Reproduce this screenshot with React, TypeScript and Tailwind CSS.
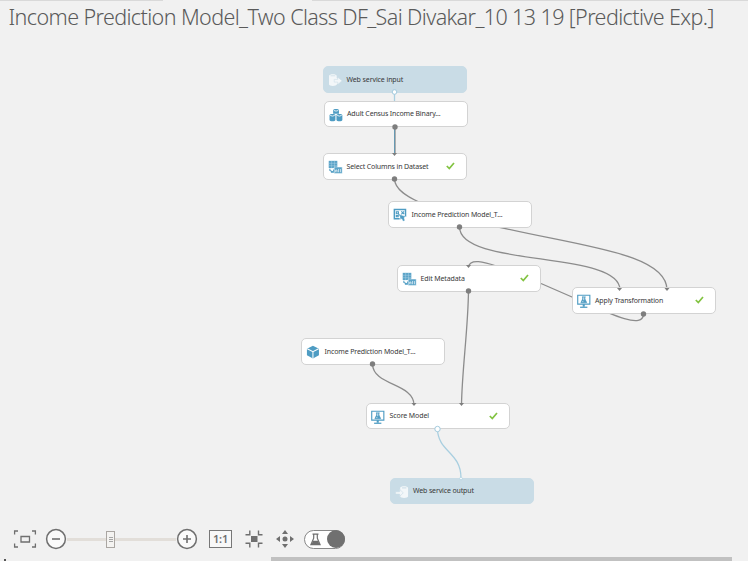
import type { ReactNode } from 'react';

type IconKind = 'input' | 'output' | 'dataset' | 'columns' | 'transform' | 'model' | 'monitor';

interface GraphNode {
  place: string;
  label: string;
  text: string;
  icon: IconKind;
  service?: boolean;
  done?: boolean;
}

const nodes: GraphNode[] = [
  { place: 'left-[323px] top-[26px]', label: 'Web service input', text: 'tracking-[-0.1px]', icon: 'input', service: true },
  { place: 'left-[323.5px] top-[60.5px]', label: 'Adult Census Income Binary...', text: 'tracking-[-0.15px]', icon: 'dataset' },
  { place: 'left-[323px] top-[113px]', label: 'Select Columns in Dataset', text: 'tracking-[-0.14px]', icon: 'columns', done: true },
  { place: 'left-[388px] top-[161px]', label: 'Income Prediction Model_T...', text: 'tracking-[-0.13px]', icon: 'transform' },
  { place: 'left-[397px] top-[225px]', label: 'Edit Metadata', text: 'tracking-[-0.12px]', icon: 'columns', done: true },
  { place: 'left-[571.5px] top-[247px]', label: 'Apply Transformation', text: 'tracking-[-0.15px]', icon: 'monitor', done: true },
  { place: 'left-[301px] top-[298px]', label: 'Income Prediction Model_T...', text: 'tracking-[-0.13px]', icon: 'model' },
  { place: 'left-[366px] top-[362.5px]', label: 'Score Model', text: 'tracking-[-0.1px]', icon: 'monitor', done: true },
  { place: 'left-[389.5px] top-[437.5px]', label: 'Web service output', text: 'tracking-[-0.14px]', icon: 'output', service: true },
];

const glyphs: Record<IconKind, ReactNode> = {
  input: (
    <g fill="#f3f7f9">
      <path d="M1 2.6C1 .6 8.400 .6 8.400 2.600V4.800L13.500 7.500 8.400 11V11.200C8.400 13 1 13 1 11.200Z" />
      <path d="M6 6.200h3.500V4L13.500 7.500 9.500 11V8.800H6Z" stroke="#c9dce6" strokeWidth=".5" />
      <path d="M2.500 2.700h4.500" stroke="#c9dce6" strokeWidth=".7" />
    </g>
  ),
  output: (
    <g fill="#f3f7f9">
      <path d="M5 2.600C5 .6 12.600 .6 12.600 2.600V11.200C12.600 13 5 13 5 11.200Z" />
      <path d="M.5 6.500h4V4.200L8 7.600 4.500 11V8.800H.5Z" stroke="#c9dce6" strokeWidth=".6" />
      <path d="M6.800 2.800h4.200" stroke="#c9dce6" strokeWidth="1" />
    </g>
  ),
  dataset: (
    <g fill="#4e9cc3">
      <path d="M4 2.200C4 .4 9.600 .4 9.600 2.200V5.500H4Z" />
      <path d="M.5 7C.5 5.300 6.200 5.300 6.200 7V11.700C6.200 13.300 .5 13.300 .5 11.700ZM7.200 7C7.200 5.300 12.900 5.300 12.900 7V11.700C12.900 13.300 7.200 13.300 7.200 11.700Z" />
      <path d="M4.700 2.400Q6.800 3.600 8.900 2.400M1.200 7.200Q3.300 8.400 5.500 7.200M7.900 7.200Q10 8.400 12.200 7.200" fill="none" stroke="#e7f3f8" strokeWidth=".9" />
    </g>
  ),
  columns: (
    <g>
      <path d="M.7 .8h8.300v7H.7z" fill="#5ba4c8" />
      <path d="M.7 3.200h8.300M.7 5.500h8.300M3.500 .8v7M6.300 .8v7" stroke="#b9d9e8" strokeWidth=".4" />
      <path d="M1.800 8.500v1.500L5 11.500M5.300 9.200V11.800H2.800" fill="none" stroke="#4e9cc3" strokeWidth="1" />
      <path d="M6 6.800h7.700v6.200H6z" fill="#5ba4c8" stroke="#fff" strokeWidth=".4" />
      <path d="M7.400 11.800V9.700h1.300v2.100M10.200 11.800V8.600M12 11.800V8.800" fill="none" stroke="#eef7fb" strokeWidth=".7" />
    </g>
  ),
  transform: (
    <g fill="none" stroke="#4e9cc3">
      <path d="M6.500 10.300H1.300V1.500h10.800v7" strokeWidth="1.400" />
      <path d="M3.200 3.600h2v2h-2zM3.200 7.200h1.800v1.300H3.200zM8 3.200l2.800 2.600M10.700 3.200 8 6.200M5.300 5.800 7.500 7.800" strokeWidth="1.100" />
      <path d="M6.300 6.300 12.400 8.300 10.600 9.300 11.500 12 9.700 12.900 8.500 10.400 7.200 11.300Z" fill="#4e9cc3" stroke="#fff" strokeWidth=".3" />
    </g>
  ),
  model: (
    <g>
      <path d="M6.700 .8 12.500 3.500V10L6.700 13 .9 10V3.500Z" fill="#4e9cc3" />
      <path d="M1.200 3.700 6.700 6.400 12.200 3.700M6.700 6.400V13" fill="none" stroke="#fff" strokeWidth="1" />
    </g>
  ),
  monitor: (
    <g fill="none" stroke="#4e9cc3">
      <path d="M.7 1.200h11.700v8.600H.7z" strokeWidth="1.100" />
      <path d="M6.500 9.800v2.500" strokeWidth="2" />
      <path d="M3 12.800h7" strokeWidth="1.200" />
      <path d="M4.800 2.800h3.500M5.500 2.800v2L3.800 8.300h5.500L7.600 4.800v-2" fill="#4e9cc3" strokeWidth=".8" />
      <path d="M6.500 3.200v2.800M5.200 7.300h.9" stroke="#fff" strokeWidth=".7" />
    </g>
  ),
};

function NodeCard({ node }: { node: GraphNode }) {
  const skin = node.service ? 'border-[#c9dce6] bg-[#c9dce6]' : 'border-[#d3d3d3] bg-white';
  return (
    <div className={`absolute flex h-[26.5px] w-[144px] items-center rounded-[5px] border pl-[4px] pr-[11px] ${skin} ${node.place}`}>
      <svg className="mt-[2px] h-[14.5px] w-[14.5px] shrink-0" viewBox="0 0 14 14">
        {glyphs[node.icon]}
      </svg>
      <span className={`ml-[4px] mt-px flex-1 whitespace-nowrap text-[7px] leading-[10px] text-[#383838] ${node.text}`}>{node.label}</span>
      {node.done && (
        <svg className="h-[8px] w-[9px] shrink-0" viewBox="0 0 9 8">
          <path d="M.8 4 3.300 6.600 8 1" fill="none" stroke="#82c341" strokeWidth="1.700" />
        </svg>
      )}
    </div>
  );
}

const edges = [
  'M395 127V155',
  'M394.500 179C395 190 408 197 419 202',
  'M490 225C575 246 667 252 667 290',
  'M459.500 227C460 268 620 250 620 290',
  'M643.500 314C643 330 610 314 572 297L541 283.500',
  'M498 266.500C484 262 470 258 468.500 267',
  'M468.500 291C468 330 462 370 461.500 405',
  'M372.500 364C373 386 414 383 414 405',
];

const outPorts = [[395, 127], [394.5, 179], [459.5, 227], [468.5, 291], [643.5, 314], [372.5, 364]];
const inPorts = [[394.5, 156], [468.5, 268], [619.5, 291], [667, 291], [414, 406], [461.5, 406]];

function Edges() {
  return (
    <svg className="absolute inset-0" width="748" height="480" viewBox="0 40 748 480" fill="none">
      <path d="M394.500 92V101M437.500 429C438 452 461 452 461 478" stroke="#a9cfe0" strokeWidth="1.300" />
      {edges.map((d) => <path key={d} d={d} stroke="#8c8c8c" strokeWidth="1.300" />)}
      <path d="M394.500 128V154" stroke="#6699b2" strokeWidth="1" />
    </svg>
  );
}

function Ports() {
  return (
    <svg className="absolute inset-0" width="748" height="480" viewBox="0 40 748 480" fill="none">
      {outPorts.map(([x, y]) => <circle key={`${x}-${y}`} cx={x} cy={y} r="2.700" fill="#7e7e7e" />)}
      {inPorts.map(([x, y]) => <path key={`${x}-${y}`} d={`M${x - 2.500} ${y - 3}h5L${x} ${y}Z`} fill="#7e7e7e" />)}
      <g fill="#fff" stroke="#a3cbde">
        <circle cx="394.500" cy="92" r="2.300" />
        <circle cx="437.500" cy="429" r="2.700" />
        <circle cx="461" cy="478.500" r="1.300" strokeWidth=".6" />
      </g>
    </svg>
  );
}

function Toolbar() {
  return (
    <footer className="flex h-[37px] items-center pl-[13px] pt-px text-[#6f6f6f]">
      <svg className="h-[20px] w-[24px]" viewBox="0 0 24 20" fill="none" stroke="currentColor">
        <path d="M1.600 5.500V2H5M19 2h3.400v3.500M22.400 14.500V18H19M5 18H1.600v-3.500" strokeWidth="1.300" />
        <path d="M8 7.500h8.500v5.500H8z" strokeWidth="1.300" />
      </svg>
      <div className="ml-[8px] flex items-center">
        <svg className="h-[22px] w-[22px]" viewBox="0 0 22 22" fill="none" stroke="currentColor">
          <circle cx="11" cy="11" r="9.400" fill="#fafafa" strokeWidth="1.500" />
          <path d="M7 11h8" strokeWidth="1.600" />
        </svg>
        <div className="flex h-[3px] w-[109px] items-center bg-[#e2ded9] pl-[39px]">
          <div className="flex h-[17px] w-[9px] flex-col items-center justify-center gap-[1px] border border-[#aaa6a2] bg-[#f4f3f1]">
            <i className="h-px w-[4px] bg-[#a5a5a5]" />
            <i className="h-px w-[4px] bg-[#a5a5a5]" />
            <i className="h-px w-[4px] bg-[#a5a5a5]" />
          </div>
        </div>
        <svg className="h-[22px] w-[22px]" viewBox="0 0 22 22" fill="none" stroke="currentColor">
          <circle cx="11" cy="11" r="9.400" fill="#fafafa" strokeWidth="1.500" />
          <path d="M7 11h8M11 7v8" strokeWidth="1.600" />
        </svg>
      </div>
      <div className="ml-[11px] flex h-[18px] w-[23px] items-center justify-center border border-[#777] bg-[#f8f8f8] pb-[2px] text-[11px] font-semibold leading-none tracking-[-0.2px]">
        1:1
      </div>
      <svg className="ml-[12px] h-[20px] w-[20px]" viewBox="0 0 20 20" fill="none" stroke="currentColor" strokeWidth="1.400">
        <path d="M7 7h6.500v6H7z" fill="currentColor" stroke="none" />
        <path d="M1.500 5.800H5.800V1.500M18.500 5.800H14.500V1.500M1.500 14.200H5.800V18.500M18.500 14.200H14.500V18.500" />
      </svg>
      <svg className="ml-[11px] h-[20px] w-[20px]" viewBox="0 0 20 20" fill="currentColor">
        <circle cx="10" cy="10" r="2.500" />
        <path d="M10 1 13 5H7ZM10 19 7 15h6ZM1 10 5 7v6ZM19 10 15 13V7Z" />
      </svg>
      <div className="ml-[9px] flex h-[19px] w-[41px] items-center justify-between rounded-full border border-[#888] bg-white pl-[5px]">
        <svg className="h-[13px] w-[11px]" viewBox="0 0 11 13" fill="none" stroke="currentColor" strokeWidth="1.200">
          <path d="M2.500 1.200h6M3.700 1.200v4L.9 11.700h9.200L7.300 5.200v-4" />
          <path d="M3 7.800h5l1.500 3.500h-8Z" fill="currentColor" stroke="none" />
        </svg>
        <i className="-mr-px h-[18px] w-[18px] rounded-full bg-[#707070]" />
      </div>
    </footer>
  );
}

export default function App() {
  return (
    <main className="flex h-[561px] w-[748px] flex-col overflow-hidden bg-[#f1f1f1] font-['Noto_Sans','Open_Sans',sans-serif]">
      <div className="flex h-px justify-between">
        <i className="w-[163px] bg-[#d9d9d9]" />
        <i className="w-[436px] bg-[#d9d9d9]" />
      </div>
      <header className="h-[39px] pl-[8.5px]">
        <h1 className="whitespace-nowrap text-[21.5px] font-light leading-[31px] tracking-[-0.6px] text-[#5a5a5a]">
          Income Prediction Model_Two Class DF_Sai Divakar_10 13 19 [Predictive Exp.]
        </h1>
      </header>
      <section className="relative h-[480px]">
        <Edges />
        {nodes.map((node) => <NodeCard key={node.place} node={node} />)}
        <Ports />
      </section>
      <Toolbar />
      <div className="flex h-[4px] justify-between pl-[4px] pr-[16px]">
        <i className="mt-[2px] h-[2px] w-[2px] bg-[#555]" />
        <i className="w-[461px] bg-[#c1c1c1]" />
      </div>
    </main>
  );
}
